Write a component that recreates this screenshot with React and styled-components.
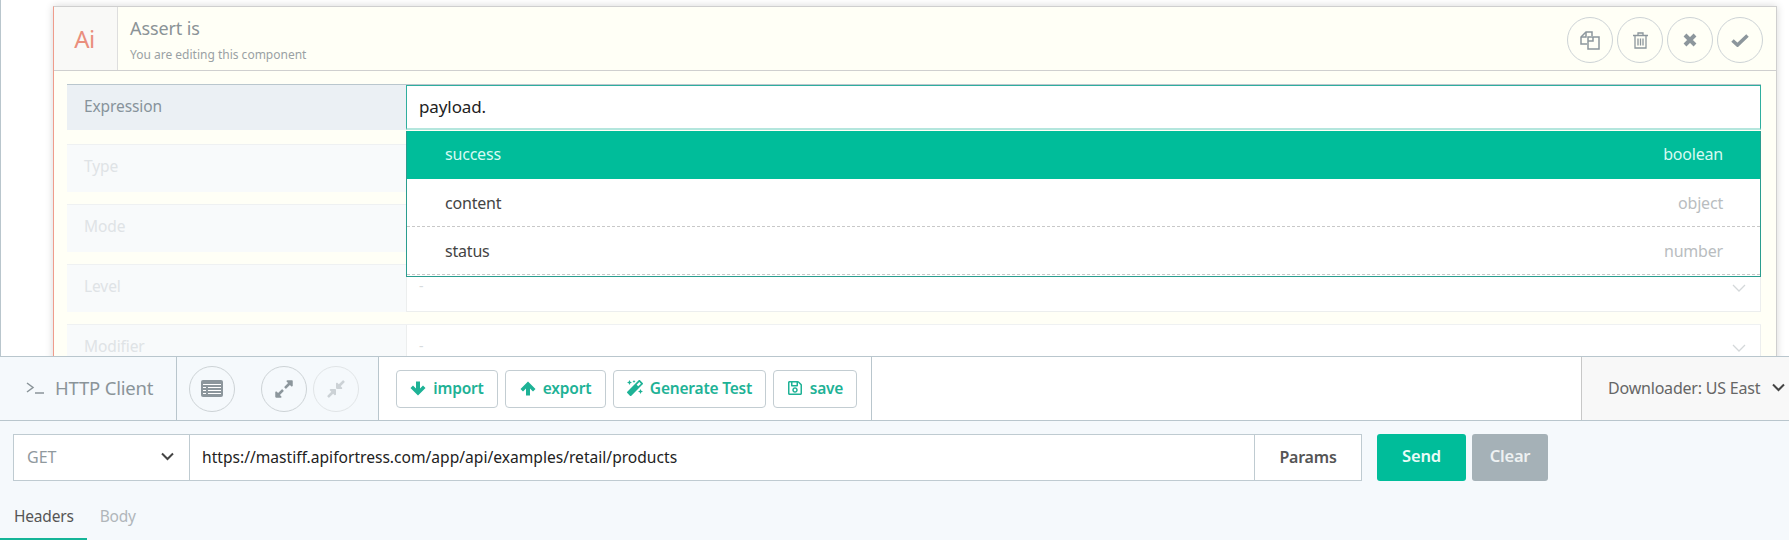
import React from "react";
import styled, { createGlobalStyle } from "styled-components";
import { FaMagic, FaRegSave, FaExpandAlt, FaCompressAlt } from "react-icons/fa";

const GlobalStyle = createGlobalStyle`
  html, body {
    margin: 0;
    padding: 0;
    background: #fff;
    font-family: "Noto Sans", "Open Sans", sans-serif;
  }
  * { box-sizing: border-box; }
`;

const Page = styled.div`
  width: 1789px;
  height: 540px;
  display: flex;
  flex-direction: column;
  overflow: hidden;
`;

const Canvas = styled.div`
  height: 356px;
  flex: none;
  border-left: 1px solid #b9c6cd;
  padding: 6px 12px 0 52px;
  overflow: hidden;
`;

const Card = styled.div`
  height: 400px;
  background: #fffff6;
  border: 1px solid #cfcfcf;
  border-left-color: #ef9c8c;
  box-shadow: 0 0 8px rgba(0, 0, 0, 0.16);
`;

const CardHeader = styled.div`
  height: 64px;
  display: flex;
  align-items: stretch;
  border-bottom: 1px solid #cfcfcf;
`;

const TypeBadge = styled.div`
  width: 64px;
  flex: none;
  display: flex;
  align-items: center;
  justify-content: center;
  padding-right: 2px;
  background: #f9f9f7;
  border-right: 1px solid #dedede;
  color: #ea8f7d;
  font-size: 24px;
  letter-spacing: -0.5px;
`;

const Titles = styled.div`
  flex: 1;
  padding: 9px 0 0 12px;
`;

const Title = styled.div`
  color: #8b9396;
  font-size: 18px;
  line-height: 24px;
  letter-spacing: -0.1px;
`;

const Subtitle = styled.div`
  color: #9aa1a4;
  font-size: 12px;
  line-height: 16px;
  margin-top: 7px;
`;

const HeaderActions = styled.div`
  display: flex;
  gap: 4px;
  align-items: flex-start;
  padding: 10px 13px 0 0;
`;

const RoundButton = styled.div`
  width: 46px;
  height: 46px;
  flex: none;
  border-radius: 50%;
  border: 1px solid ${(p) => (p.$faded ? "#e1e5e7" : "#cdd3d6")};
  display: flex;
  align-items: center;
  justify-content: center;
  color: ${(p) => (p.$faded ? "#ccd2d6" : "#8c969c")};
`;

const Fields = styled.div`
  position: relative;
  padding: 13px 15px 0 13px;
  display: flex;
  flex-direction: column;
  gap: 12px;
`;

const FieldRow = styled.div`
  display: flex;
  height: ${(p) => (p.$active ? 46 : 48)}px;
  margin-bottom: ${(p) => (p.$active ? 2 : 0)}px;
  border-top: 1px solid ${(p) => (p.$active ? "#b9c6cd" : "#eff1f2")};
`;

const FieldLabel = styled.div`
  width: 339px;
  flex: none;
  padding: 10px 0 0 17px;
  font-size: 15.5px;
  line-height: 22px;
  letter-spacing: -0.1px;
  background: ${(p) => (p.$active ? "#ebf0f4" : "#f8fafb")};
  color: ${(p) => (p.$active ? "#87939b" : "#dfe3e6")};
`;

const FieldValue = styled.div`
  flex: 1;
  position: relative;
  background: #fff;
  border: 1px solid #eceeee;
  border-top: none;
  padding: 11px 12px 0;
  color: #d8dcde;
  font-size: 14px;
`;

const Chevron = styled.svg`
  position: absolute;
  right: 14px;
  top: 19px;
  width: 14px;
  height: 9px;
  fill: none;
  stroke: #d4d8da;
  stroke-width: 1.3;
`;

const ExpressionInput = styled.div`
  flex: 1;
  background: #fff;
  border: 1px solid #2fae9e;
  border-bottom: 2px solid #b4e6dd;
  padding: 9px 12px 0;
  color: #222;
  font-size: 17px;
  line-height: 24px;
  letter-spacing: -0.1px;
`;

const Suggestions = styled.div`
  position: absolute;
  left: 352px;
  right: 15px;
  top: 60px;
  height: 146px;
  background: #fff;
  border: 1px solid #2a9d8f;
  border-top: none;
`;

const Suggestion = styled.div`
  height: 48px;
  display: flex;
  align-items: center;
  justify-content: space-between;
  padding: 0 37px ${(p) => (p.$selected ? 2 : 0)}px 38px;
  font-size: 16px;
  letter-spacing: -0.2px;
  background: ${(p) => (p.$selected ? "#00bd9a" : "#fff")};
  color: ${(p) => (p.$selected ? "#d6faf2" : "#444")};
  border-bottom: ${(p) => (p.$selected ? "none" : "1px dashed #c8c8c8")};
`;

const SuggestionType = styled.span`
  color: ${(p) => (p.$selected ? "#d6faf2" : "#b9bdbf")};
`;

const Toolbar = styled.div`
  height: 65px;
  flex: none;
  display: flex;
  align-items: stretch;
  background: #fff;
  border-top: 1px solid #b9c6cd;
  border-bottom: 1px solid #b9c6cd;
`;

const ClientTitle = styled.div`
  width: 177px;
  flex: none;
  display: flex;
  align-items: center;
  gap: 10px;
  padding: 0 0 2px 26px;
  background: #f5f9fc;
  border-right: 1px solid #b9c6cd;
  color: #8a9499;
  font-size: 18.5px;
  letter-spacing: -0.2px;
`;

const PromptIcon = styled.svg`
  width: 19px;
  height: 12px;
  flex: none;
  fill: none;
  stroke: #8a9499;
  stroke-width: 1.5;
`;

const ViewControls = styled.div`
  width: 202px;
  flex: none;
  display: flex;
  align-items: center;
  padding-left: 12px;
  background: #f5f9fc;
  border-right: 1px solid #b9c6cd;
`;

const ZoomControls = styled.div`
  display: flex;
  gap: 6px;
  margin-left: 26px;
`;

const Actions = styled.div`
  flex: 1;
  display: flex;
  align-items: center;
  padding-left: 17px;
`;

const ActionGroup = styled.div`
  display: flex;
  align-items: center;
  gap: 7px;
  height: 100%;
  padding-right: 14px;
  border-right: 1px solid #b9c6cd;
`;

const ActionButton = styled.div`
  width: ${(p) => p.$width}px;
  height: 38px;
  display: flex;
  align-items: center;
  justify-content: center;
  gap: 7px;
  padding-bottom: 1px;
  border: 1px solid #c3cdd2;
  border-radius: 4px;
  background: #fff;
  color: #1eb296;
  font-size: 15.5px;
  font-weight: 600;
  letter-spacing: -0.2px;
`;

const ArrowIcon = styled.svg`
  width: 16px;
  height: 15px;
  flex: none;
  fill: #1eb296;
  transform: ${(p) => (p.$up ? "rotate(180deg)" : "none")};
`;

const Downloader = styled.div`
  width: 208px;
  flex: none;
  display: flex;
  align-items: center;
  gap: 12px;
  padding: 0 0 2px 26px;
  background: #f8f8f8;
  border-left: 1px solid #c8c8c8;
  color: #666;
  font-size: 16px;
  letter-spacing: -0.2px;
  white-space: nowrap;
`;

const SmallChevron = styled.svg`
  width: 13px;
  height: 9px;
  flex: none;
  fill: none;
  stroke: #444;
  stroke-width: 2;
`;

const RequestPanel = styled.div`
  flex: 1;
  background: #f5f9fc;
  display: flex;
  flex-direction: column;
`;

const RequestRow = styled.div`
  display: flex;
  align-items: flex-start;
  padding: 13px 0 0 13px;
`;

const MethodSelect = styled.div`
  width: 177px;
  height: 47px;
  flex: none;
  display: flex;
  align-items: center;
  justify-content: space-between;
  padding: 0 15px 2px 13px;
  background: #fff;
  border: 1px solid #bfcbd1;
  color: #90999e;
  font-size: 16px;
`;

const UrlInput = styled.div`
  width: 1065px;
  height: 47px;
  flex: none;
  display: flex;
  align-items: center;
  padding: 0 0 2px 12px;
  background: #fff;
  border: 1px solid #bfcbd1;
  border-left: none;
  color: #222;
  font-size: 15.6px;
`;

const ParamsButton = styled.div`
  width: 107px;
  height: 47px;
  flex: none;
  display: flex;
  align-items: center;
  justify-content: center;
  padding-bottom: 2px;
  background: #fff;
  border: 1px solid #bfcbd1;
  border-left: none;
  color: #555;
  font-size: 16px;
  font-weight: 600;
  letter-spacing: -0.2px;
`;

const SolidButton = styled.div`
  width: ${(p) => p.$width}px;
  height: 47px;
  margin-left: ${(p) => p.$gap}px;
  flex: none;
  display: flex;
  align-items: center;
  justify-content: center;
  padding-bottom: 4px;
  border-radius: 3px;
  background: ${(p) => p.$bg};
  color: ${(p) => p.$fg};
  font-size: 16.5px;
  font-weight: 600;
  letter-spacing: -0.2px;
`;

const Tabs = styled.div`
  display: flex;
  margin-top: 22px;
`;

const Tab = styled.div`
  height: 37px;
  padding: 1px ${(p) => (p.$active ? 13 : 0)}px 0 ${(p) => (p.$active ? 14 : 0)}px;
  margin-right: 13px;
  border-bottom: 2px solid ${(p) => (p.$active ? "#15b598" : "transparent")};
  color: ${(p) => (p.$active ? "#555" : "#b0b6ba")};
  font-size: 15.5px;
  line-height: 24px;
  letter-spacing: -0.2px;
`;

const fields = [
  { label: "Type", value: "" },
  { label: "Mode", value: "" },
  { label: "Level", value: "-" },
  { label: "Modifier", value: "-" },
];

const suggestions = [
  { name: "success", type: "boolean", selected: true },
  { name: "content", type: "object" },
  { name: "status", type: "number" },
];

function Arrow({ up }) {
  return (
    <ArrowIcon $up={up} viewBox="0 0 16 15">
      <path d="M8 14.5L.5 7 3 4.5l3 3V.5h4v7l3-3L15.5 7z" />
    </ArrowIcon>
  );
}

const actionButtons = [
  { label: "import", width: 102, icon: <Arrow /> },
  { label: "export", width: 101, icon: <Arrow up /> },
  { label: "Generate Test", width: 153, icon: <FaMagic size={16} /> },
  { label: "save", width: 84, icon: <FaRegSave size={16} /> },
];

function CopyIcon() {
  return (
    <svg width="20" height="19" viewBox="0 0 20 19" fill="none" stroke="currentColor" strokeWidth="1.5">
      <path d="M7 13H1V6l5-5h6v4" />
      <path d="M6 1v5H1" />
      <path d="M8 6h5v4H8zM13 6h6v12H8v-8" />
    </svg>
  );
}

function TrashIcon() {
  return (
    <svg width="15" height="17" viewBox="0 0 15 17" fill="none" stroke="currentColor" strokeWidth="1.3">
      <path d="M0 3.5h15M5 3.5V1h5v2.5M2 3.5V16h11V3.5" />
      <path d="M5 6.5v7M7.5 6.5v7M10 6.5v7" />
    </svg>
  );
}

function CloseIcon() {
  return (
    <svg width="14" height="14" viewBox="0 0 14 14" fill="none" stroke="currentColor" strokeWidth="4">
      <path d="M2 2l10 10M12 2L2 12" />
    </svg>
  );
}

function CheckIcon() {
  return (
    <svg width="18" height="13" viewBox="0 0 18 13" fill="none" stroke="currentColor" strokeWidth="3.6">
      <path d="M1.5 6.5l5 4.5 10-9.5" />
    </svg>
  );
}

function ListIcon() {
  return (
    <svg width="22" height="17" viewBox="0 0 22 17">
      <rect width="22" height="17" rx="2" fill="currentColor" />
      <path d="M2 4.5h18M2 7.5h3M7 7.5h13M2 10.5h3M7 10.5h13M2 13.5h3M7 13.5h13" stroke="#fff" strokeWidth="1.2" />
    </svg>
  );
}

function DownChevron() {
  return (
    <SmallChevron viewBox="0 0 13 9">
      <path d="M1 1.5l5.5 5.5L12 1.5" />
    </SmallChevron>
  );
}

export default function App() {
  return (
    <Page>
      <GlobalStyle />
      <Canvas>
        <Card>
          <CardHeader>
            <TypeBadge>Ai</TypeBadge>
            <Titles>
              <Title>Assert is</Title>
              <Subtitle>You are editing this component</Subtitle>
            </Titles>
            <HeaderActions>
              <RoundButton><CopyIcon /></RoundButton>
              <RoundButton><TrashIcon /></RoundButton>
              <RoundButton><CloseIcon /></RoundButton>
              <RoundButton><CheckIcon /></RoundButton>
            </HeaderActions>
          </CardHeader>
          <Fields>
            <FieldRow $active>
              <FieldLabel $active>Expression</FieldLabel>
              <ExpressionInput>payload.</ExpressionInput>
            </FieldRow>
            {fields.map((f) => (
              <FieldRow key={f.label}>
                <FieldLabel>{f.label}</FieldLabel>
                <FieldValue>
                  {f.value}
                  <Chevron viewBox="0 0 14 9">
                    <path d="M1 1l6 6 6-6" />
                  </Chevron>
                </FieldValue>
              </FieldRow>
            ))}
            <Suggestions>
              {suggestions.map((s) => (
                <Suggestion key={s.name} $selected={s.selected}>
                  <span>{s.name}</span>
                  <SuggestionType $selected={s.selected}>{s.type}</SuggestionType>
                </Suggestion>
              ))}
            </Suggestions>
          </Fields>
        </Card>
      </Canvas>
      <Toolbar>
        <ClientTitle>
          <PromptIcon viewBox="0 0 19 12">
            <path d="M1 1l6 4.5L1 10M9 11h9" />
          </PromptIcon>
          HTTP Client
        </ClientTitle>
        <ViewControls>
          <RoundButton><ListIcon /></RoundButton>
          <ZoomControls>
            <RoundButton><FaExpandAlt size={20} /></RoundButton>
            <RoundButton $faded><FaCompressAlt size={20} /></RoundButton>
          </ZoomControls>
        </ViewControls>
        <Actions>
          <ActionGroup>
            {actionButtons.map((b) => (
              <ActionButton key={b.label} $width={b.width}>
                {b.icon}
                {b.label}
              </ActionButton>
            ))}
          </ActionGroup>
        </Actions>
        <Downloader>
          Downloader: US East
          <DownChevron />
        </Downloader>
      </Toolbar>
      <RequestPanel>
        <RequestRow>
          <MethodSelect>
            GET
            <DownChevron />
          </MethodSelect>
          <UrlInput>https://mastiff.apifortress.com/app/api/examples/retail/products</UrlInput>
          <ParamsButton>Params</ParamsButton>
          <SolidButton $width={89} $gap={15} $bg="#00bd9a" $fg="#e9fbf7">Send</SolidButton>
          <SolidButton $width={76} $gap={6} $bg="#a5b1b7" $fg="#eef1f2">Clear</SolidButton>
        </RequestRow>
        <Tabs>
          <Tab $active>Headers</Tab>
          <Tab>Body</Tab>
        </Tabs>
      </RequestPanel>
    </Page>
  );
}
